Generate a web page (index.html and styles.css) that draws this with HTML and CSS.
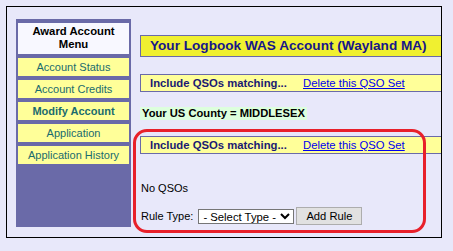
FILE: index.html
```html
<!DOCTYPE html>
<html lang="en">
<head>
    <meta charset="UTF-8">
    <title>Logbook WAS Account</title>
    <link rel="stylesheet" href="styles.css">
</head>
<body>
    <div class="frame">
        <div class="menu">
            <div class="menu-head">Award Account<br>Menu</div>
            <a class="menu-item" href="#">Account Status</a>
            <a class="menu-item" href="#">Account Credits</a>
            <a class="menu-item current" href="#">Modify Account</a>
            <a class="menu-item" href="#">Application</a>
            <a class="menu-item" href="#">Application History</a>
        </div>
        <div class="main">
            <div class="title-bar">Your Logbook WAS Account (Wayland MA)</div>
            <div class="qso-set first">
                <span class="qso-label">Include QSOs matching...</span>
                <a href="#">Delete this QSO Set</a>
            </div>
            <div class="county">Your US County = MIDDLESEX</div>
            <div class="qso-set second">
                <span class="qso-label">Include QSOs matching...</span>
                <a href="#">Delete this QSO Set</a>
            </div>
            <p class="no-qsos">No QSOs</p>
            <div class="rule-row">
                <span>Rule Type:</span>
                <select class="rule-select">
                    <option>- Select Type -</option>
                </select>
                <button class="add-rule">Add Rule</button>
            </div>
        </div>
        <!-- annotation drawn over the second QSO set -->
        <div class="highlight"></div>
    </div>
</body>
</html>
```

FILE: styles.css
```css
body {
    margin: 6px;
    background-color: #e8e8fa;
    font-family: "Liberation Sans", Arial, sans-serif;
    font-size: 11px;
    color: #000;
}
.frame {
    position: relative;
    display: flex;
    align-items: stretch;
    box-sizing: border-box;
    width: 436px;
    height: 232px;
    padding: 12px 0 10px 9px;
    border: 1px solid #000;
    overflow: hidden;
}
.menu {
    flex: none;
    display: flex;
    flex-direction: column;
    gap: 4px;
    box-sizing: border-box;
    width: 115px;
    padding: 4px 2px;
    background-color: #6a6aa8;
}
.menu-head {
    height: 31px;
    padding-top: 2px;
    box-sizing: border-box;
    background-color: #f8f8ff;
    text-align: center;
    font-size: 11.3px;
    font-weight: bold;
    line-height: 13px;
}
.menu-item {
    display: block;
    height: 18px;
    line-height: 18px;
    background-color: #ffff99;
    color: #1a6b6e;
    text-align: center;
    text-decoration: none;
}
.menu-item.current {
    font-weight: bold;
}
.main {
    flex: none;
    width: 320px;
    margin-left: 9px;
}
.title-bar {
    box-sizing: border-box;
    height: 22px;
    margin-top: 16px;
    padding-left: 9px;
    line-height: 20px;
    background-color: #f0f030;
    border: 1px solid #6a6aa8;
    color: #16168a;
    font-size: 13.6px;
    font-weight: bold;
}
.qso-set {
    display: flex;
    box-sizing: border-box;
    height: 18px;
    padding-left: 9px;
    line-height: 16px;
    font-size: 11.3px;
    background-color: #ffff99;
    border: 1px solid #6a6aa8;
}
.qso-set.first {
    margin-top: 17px;
}
.qso-set.second {
    margin-top: 16px;
}
.qso-label {
    width: 153px;
    color: #1a1a72;
    font-weight: bold;
}
.qso-set a {
    color: #0000ee;
}
.county {
    width: fit-content;
    height: 13px;
    margin-top: 15px;
    padding: 0 2px;
    line-height: 13px;
    font-size: 11.2px;
    background-color: #ddffdd;
    font-weight: bold;
}
.no-qsos {
    margin: 28px 0 0 1px;
    line-height: 13px;
}
.rule-row {
    display: flex;
    align-items: center;
    height: 18px;
    margin: 12px 0 0 1px;
}
.rule-select {
    box-sizing: border-box;
    width: 96px;
    height: 15px;
    margin-left: 5px;
    padding: 0;
    font-family: inherit;
    font-size: 11.3px;
    background-color: #fff;
    border: 1px solid #767676;
    border-radius: 0;
}
.add-rule {
    box-sizing: border-box;
    width: 66px;
    height: 18px;
    margin-left: 2px;
    padding: 0;
    font-family: inherit;
    font-size: 11.2px;
    background-color: #e1e1e1;
    border: 1px solid #adadad;
    border-radius: 0;
}
.highlight {
    position: absolute;
    left: 126px;
    top: 122px;
    box-sizing: border-box;
    width: 293px;
    height: 104px;
    border: 3px solid #e8202a;
    border-radius: 14px;
}
```
